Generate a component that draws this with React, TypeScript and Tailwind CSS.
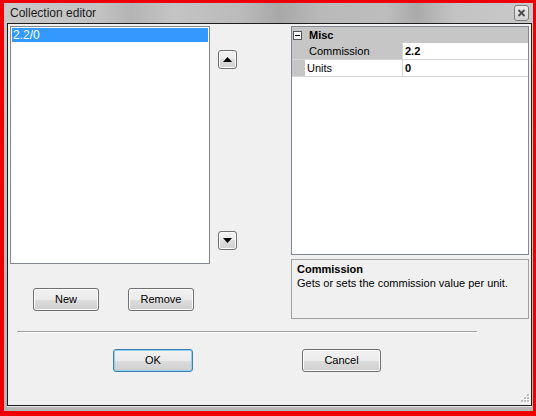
import React from "react";

function Btn({
  label,
  className = "",
  isDefault = false,
}: {
  label: string;
  className?: string;
  isDefault?: boolean;
}) {
  return (
    <div
      className={`flex h-[23px] items-center justify-center rounded-[3px] border text-[11px] leading-none text-black bg-[linear-gradient(#f2f2f2_0%,#ebebeb_50%,#dddddd_50%,#cfcfcf_100%)] ${
        isDefault
          ? "border-[#3c7fb1] shadow-[inset_0_0_0_1px_#8fd0ef]"
          : "border-[#707070] shadow-[inset_0_0_0_1px_#fcfcfc]"
      } ${className}`}
    >
      {label}
    </div>
  );
}

function ArrowBtn({ down = false }: { down?: boolean }) {
  return (
    <div className="flex h-[19px] w-[19px] items-center justify-center rounded-[3px] border border-[#707070] shadow-[inset_0_0_0_1px_#fcfcfc] bg-[linear-gradient(#f2f2f2_0%,#ebebeb_50%,#dddddd_50%,#cfcfcf_100%)]">
      <svg width="9" height="5" viewBox="0 0 9 5">
        {down ? (
          <polygon points="0,0 9,0 4.5,5" fill="#000" />
        ) : (
          <polygon points="0,5 9,5 4.5,0" fill="#000" />
        )}
      </svg>
    </div>
  );
}

function TitleBar() {
  return (
    <div className="flex h-[20px] items-start justify-between bg-[linear-gradient(90deg,#c9c9c9_0%,#c2c2c2_18%,#b4b4b4_24%,#c4c4c4_32%,#bababa_45%,#a8a8a8_52%,#b9b9b9_60%,#bdbdbd_72%,#aaaaaa_78%,#c3c3c3_85%,#c9c9c9_100%)]">
      <span className="ml-[6px] mt-[2px] text-[12px] leading-[16px] text-[#1b1b1b]">
        Collection editor
      </span>
      <div className="mr-[4px] mt-[2px] flex h-[16px] w-[15px] items-center justify-center rounded-[3px] border border-[#7a7a7a] bg-[linear-gradient(#ececec,#d2d2d2)]">
        <svg width="9" height="8" viewBox="0 0 9 8">
          <path d="M1.5 1 L7.5 7 M7.5 1 L1.5 7" stroke="#4a4a4a" strokeWidth="1.8" />
        </svg>
      </div>
    </div>
  );
}

function PropertyGrid() {
  return (
    <div className="h-[229px] border border-[#828790] bg-white text-[11px] text-black">
      <div className="flex h-[16px] items-center bg-[#c6c6c6]">
        <div className="ml-[1px] flex h-[9px] w-[9px] items-center justify-center border border-[#555555] bg-white">
          <div className="h-[1px] w-[5px] bg-black" />
        </div>
        <span className="ml-[7px] font-bold">Misc</span>
      </div>
      <div className="flex h-[17px] border-b border-[#d6d6d6]">
        <div className="w-[13px] bg-[#c6c6c6]" />
        <div className="flex w-[97px] items-center bg-[#c6c6c6] pl-[4px]">Commission</div>
        <div className="flex flex-1 items-center border-l border-[#d6d6d6] pl-[2px] font-bold">2.2</div>
      </div>
      <div className="flex h-[17px] border-b border-[#d6d6d6]">
        <div className="w-[13px] bg-[#c6c6c6]" />
        <div className="flex w-[97px] items-center pl-[2px]">Units</div>
        <div className="flex flex-1 items-center border-l border-[#d6d6d6] pl-[2px] font-bold">0</div>
      </div>
    </div>
  );
}

function Grip() {
  const dots = [
    [6, 0],
    [3, 3],
    [6, 3],
    [0, 6],
    [3, 6],
    [6, 6],
  ];
  return (
    <svg width="9" height="9" viewBox="0 0 9 9">
      {dots.map(([x, y], i) => (
        <g key={i}>
          <rect x={x + 1} y={y + 1} width="2" height="2" fill="#ffffff" />
          <rect x={x} y={y} width="2" height="2" fill="#b8b8b8" />
        </g>
      ))}
    </svg>
  );
}

export default function App() {
  return (
    <div className="h-[416px] w-[536px] bg-[#ef0000] pb-[5px] pl-[4px] pr-[3px] pt-[3px] font-['Liberation_Sans',Arial,sans-serif]">
      <div className="flex h-full flex-col bg-[#bfbfbf]">
        <TitleBar />
        <div className="flex flex-1 flex-col bg-[linear-gradient(#c8c8c8,#b6b6b6)] pb-[5px] pl-[3px] pr-[1px]">
          <div className="relative flex-1 border border-[#1c1c1c] bg-[#f0f0f0] shadow-[0_1px_0_#e8e8e8]">
            <div className="flex items-start pl-[2px] pt-[2px]">
              <div className="flex flex-col">
                <div className="h-[238px] w-[200px] border border-[#828790] bg-white p-[1px]">
                  <div className="h-[14px] bg-[#3399ff] pl-[1px] text-[12px] leading-[14px] text-white">
                    2.2/0
                  </div>
                </div>
                <div className="mt-[24px] flex gap-[29px] pl-[23px]">
                  <Btn label="New" className="w-[66px]" />
                  <Btn label="Remove" className="w-[66px]" />
                </div>
              </div>
              <div className="ml-[8px] flex flex-col pt-[24px]">
                <ArrowBtn />
                <div className="mt-[162px]">
                  <ArrowBtn down />
                </div>
              </div>
              <div className="ml-[54px] flex w-[238px] flex-col">
                <PropertyGrid />
                <div className="mt-[4px] h-[60px] border border-[#a0a0a0] bg-[#f0f0f0] px-[5px] pt-[2px] text-[11px] leading-[14px] text-black">
                  <div className="font-bold">Commission</div>
                  <div>Gets or sets the commission value per unit.</div>
                </div>
              </div>
            </div>
            <div className="ml-[9px] mt-[12px] w-[460px] border-b border-t border-b-white border-t-[#a0a0a0]" />
            <div className="mt-[16px] flex">
              <Btn label="OK" isDefault className="ml-[105px] w-[80px]" />
              <Btn label="Cancel" className="ml-[109px] w-[79px]" />
            </div>
            <div className="absolute bottom-[2px] right-[1px]">
              <Grip />
            </div>
          </div>
        </div>
      </div>
    </div>
  );
}
